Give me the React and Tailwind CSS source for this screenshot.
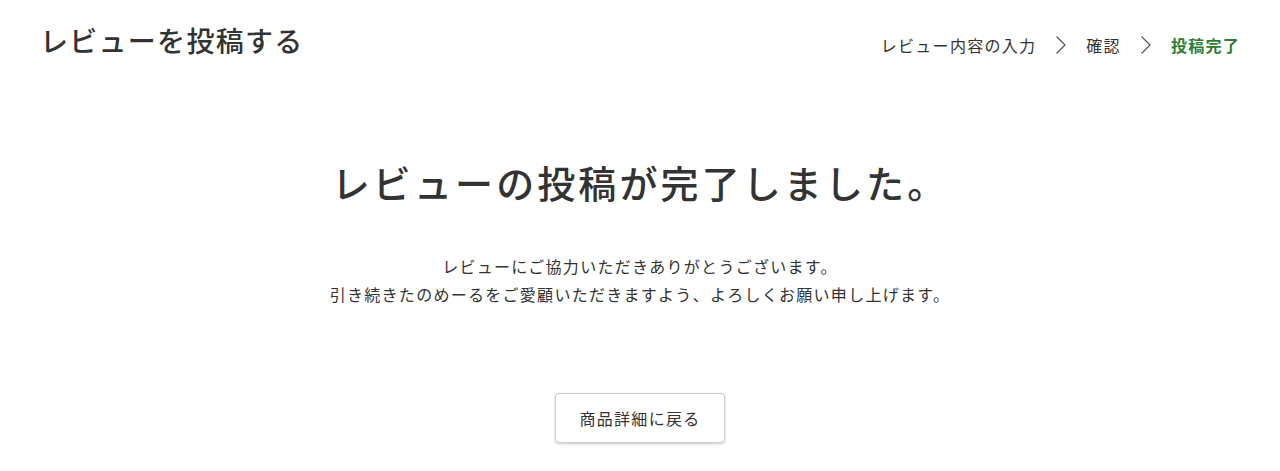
import React from 'react';

const Chevron = () => (
  <svg width="12" height="20" viewBox="0 0 12 20" className="mx-[19px] text-[#555]" fill="none">
    <path d="M1.5 1.5 L10 10 L1.5 18.5" stroke="currentColor" strokeWidth="1.2" />
  </svg>
);

const App = () => {
  const steps = ['レビュー内容の入力', '確認', '投稿完了'];

  return (
    <div
      className="min-h-[471px] bg-white text-[#333] tracking-[0.08em]"
      style={{ fontFamily: '"Noto Sans CJK JP", "Noto Sans", sans-serif' }}
    >
      {/* Header */}
      <div className="flex justify-between items-start pl-10 pr-[40px] pt-[19px]">
        <h1 className="text-[28px] leading-[42px] font-medium">レビューを投稿する</h1>
        <ol className="flex items-center mt-[14px] text-[16px] leading-6">
          {steps.map((s, i) => (
            <li key={s} className="flex items-center">
              <span className={i === steps.length - 1 ? 'text-[#2e7d32] font-bold' : ''}>{s}</span>
              {i < steps.length - 1 && <Chevron />}
            </li>
          ))}
        </ol>
      </div>

      {/* Content */}
      <div className="flex flex-col items-center">
        <h2 className="mt-[92px] text-[38px] leading-[57px] font-medium tracking-[3.1px]">レビューの投稿が完了しました。</h2>
        <p className="mt-[42px] text-[16px] leading-[28px] text-center">
          レビューにご協力いただきありがとうございます。
          <br />
          引き続きたのめーるをご愛顧いただきますよう、よろしくお願い申し上げます。
        </p>
        <button className="mt-[85px] h-[50px] w-[170px] bg-white border border-[#ccc] rounded shadow-[0_1px_3px_rgba(0,0,0,0.2)] text-[16px] text-[#333]">
          商品詳細に戻る
        </button>
      </div>
    </div>
  );
};

export default App;
